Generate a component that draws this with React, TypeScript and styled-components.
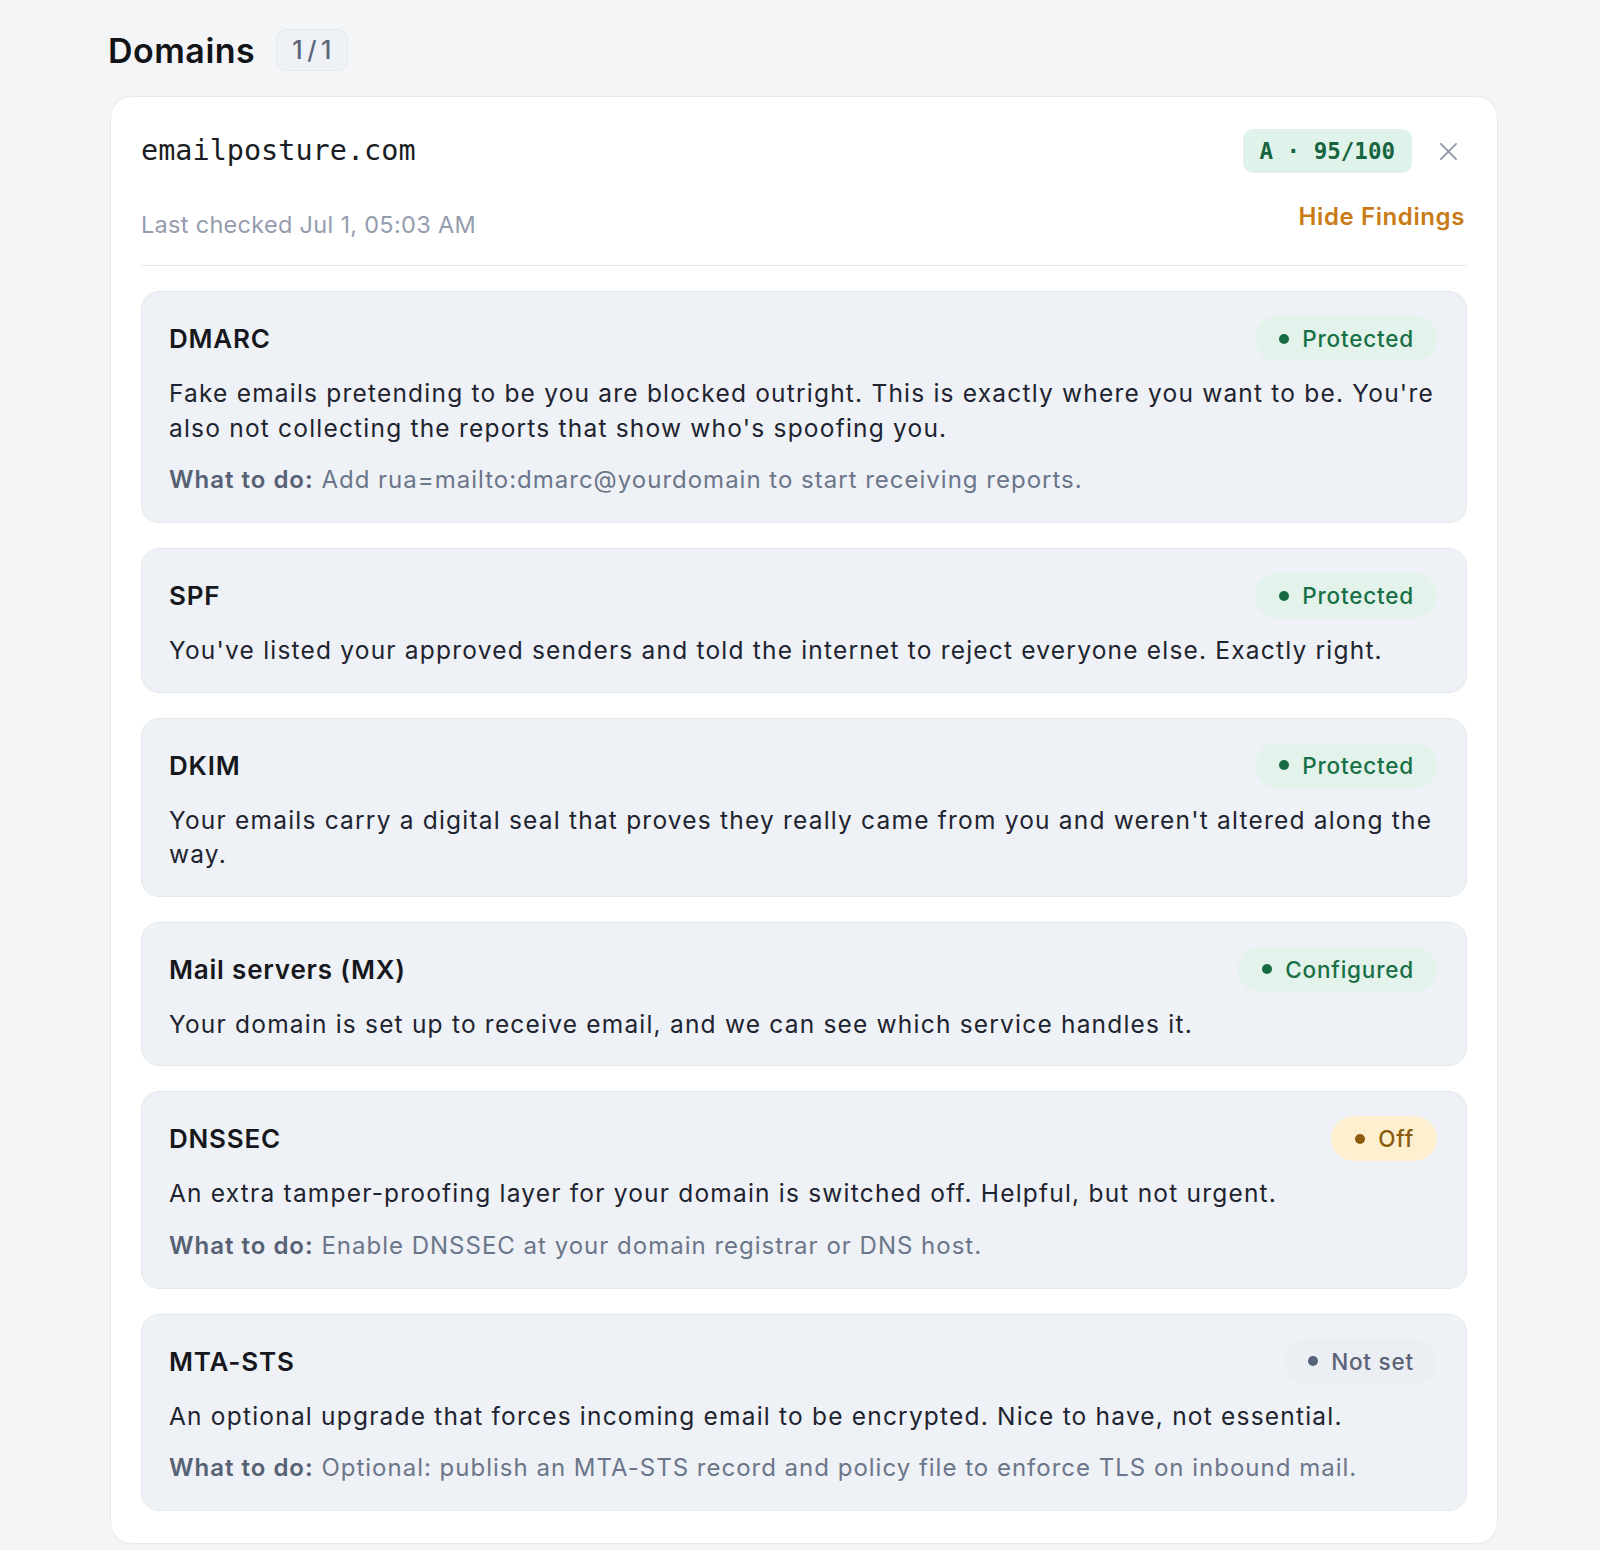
import React from "react";
import styled, { createGlobalStyle } from "styled-components";

const GlobalStyle = createGlobalStyle`
  html, body { margin: 0; padding: 0; }
  body {
    background: #f4f5f7;
    font-family: Inter, "Noto Sans", "Liberation Sans", sans-serif;
    -webkit-font-smoothing: antialiased;
  }
  * { box-sizing: border-box; }
`;

const Page = styled.div`
  padding: 29px 102px 7px 110px;
`;

const TitleRow = styled.div`
  display: flex;
  align-items: center;
  gap: 21px;
  height: 42px;
  margin-left: -2px;
  margin-bottom: 25px;
`;

const PageTitle = styled.h1`
  margin: 0;
  font-size: 34px;
  font-weight: 600;
  color: #121418;
  letter-spacing: 0.5px;
`;

const CountPill = styled.span`
  display: inline-flex;
  align-items: center;
  justify-content: center;
  height: 42px;
  padding: 0 11px 0 15px;
  border-radius: 10px;
  background: #eef1f5;
  border: 1px solid #e4e8ee;
  color: #5b6478;
  font-size: 25px;
  font-weight: 500;
  letter-spacing: 4.5px;
`;

const Card = styled.section`
  background: #fff;
  border: 1px solid #e6e9ee;
  border-radius: 22px;
  padding: 32px 30px 32px 30px;
`;

const CardHeader = styled.div`
  display: flex;
  justify-content: space-between;
  align-items: flex-start;
  padding-bottom: 25px;
  border-bottom: 1px solid #e4e7ec;
`;

const HeaderLeft = styled.div`
  display: flex;
  flex-direction: column;
`;

const DomainName = styled.div`
  font-family: "DejaVu Sans Mono", "Liberation Mono", monospace;
  font-size: 28.5px;
  line-height: 44px;
  color: #1a1d24;
`;

const Meta = styled.div`
  margin-top: 37px;
  font-size: 23.5px;
  line-height: 30px;
  letter-spacing: 0.3px;
  color: #959cae;
`;

const HeaderRight = styled.div`
  display: flex;
  flex-direction: column;
  align-items: flex-end;
`;

const ScoreRow = styled.div`
  display: flex;
  align-items: center;
  gap: 18px;
`;

const ScorePill = styled.span`
  display: inline-flex;
  align-items: center;
  height: 44px;
  padding: 0 17px;
  border-radius: 10px;
  background: #e0f3ea;
  color: #16653f;
  font-family: "DejaVu Sans Mono", "Liberation Mono", monospace;
  font-weight: 700;
  font-size: 22.5px;
  white-space: pre;
`;

const CloseButton = styled.button`
  width: 36px;
  height: 44px;
  margin-right: 1px;
  padding: 0;
  border: none;
  background: transparent;
  display: flex;
  align-items: center;
  justify-content: center;
  color: #8d94a8;
  cursor: pointer;
`;

const HideLink = styled.button`
  margin-top: 29px;
  margin-right: 2px;
  padding: 0;
  border: none;
  background: transparent;
  font-family: inherit;
  font-size: 24px;
  font-weight: 600;
  line-height: 30px;
  letter-spacing: 0.6px;
  color: #c97a14;
  cursor: pointer;
`;

const FindingList = styled.div`
  margin-top: 25px;
  display: flex;
  flex-direction: column;
  gap: 25px;
`;

const Finding = styled.article`
  background: #eef1f5;
  border: 1px solid #e4e8ee;
  border-radius: 18px;
  padding: 24px 24px 24px 27px;
`;

const FindingHeader = styled.div`
  display: flex;
  justify-content: space-between;
  align-items: center;
  min-height: 45px;
`;

const FindingTitle = styled.h3`
  margin: 0;
  font-size: 26px;
  font-weight: 600;
  letter-spacing: 0.8px;
  color: #16181d;
`;

type Tone = "good" | "warn" | "muted";

const toneColors: Record<Tone, { bg: string; fg: string; dot: string }> = {
  good: { bg: "#e3f2ea", fg: "#187046", dot: "#176b43" },
  warn: { bg: "#fdefcf", fg: "#8b5a0b", dot: "#8b5a0b" },
  muted: { bg: "#ebeef3", fg: "#5a6377", dot: "#56627a" },
};

const Badge = styled.span<{ $tone: Tone }>`
  display: inline-flex;
  align-items: center;
  gap: 13px;
  height: 45px;
  padding: 0 23px 0 24px;
  margin-right: 5px;
  border-radius: 23px;
  background: ${(p) => toneColors[p.$tone].bg};
  color: ${(p) => toneColors[p.$tone].fg};
  font-size: 22.5px;
  font-weight: 500;
  letter-spacing: 0.8px;
`;

const Dot = styled.span<{ $tone: Tone }>`
  width: 10px;
  height: 10px;
  border-radius: 50%;
  background: ${(p) => toneColors[p.$tone].dot};
`;

const Description = styled.p`
  margin: 15px 0 0;
  font-size: 24.5px;
  line-height: 34.5px;
  letter-spacing: 1.2px;
  color: #1e2430;
`;

const Advice = styled.p`
  margin: 17px 0 0;
  font-size: 24px;
  line-height: 36px;
  letter-spacing: 1px;
  color: #6b768a;
`;

const AdviceLabel = styled.strong`
  font-weight: 600;
  color: #566174;
`;

type Item = {
  title: string;
  status: string;
  tone: Tone;
  desc: string;
  todo?: string;
};

const items: Item[] = [
  {
    title: "DMARC",
    status: "Protected",
    tone: "good",
    desc:
      "Fake emails pretending to be you are blocked outright. This is exactly where you want to be. You're also not collecting the reports that show who's spoofing you.",
    todo: "Add rua=mailto:dmarc@yourdomain to start receiving reports.",
  },
  {
    title: "SPF",
    status: "Protected",
    tone: "good",
    desc:
      "You've listed your approved senders and told the internet to reject everyone else. Exactly right.",
  },
  {
    title: "DKIM",
    status: "Protected",
    tone: "good",
    desc:
      "Your emails carry a digital seal that proves they really came from you and weren't altered along the way.",
  },
  {
    title: "Mail servers (MX)",
    status: "Configured",
    tone: "good",
    desc:
      "Your domain is set up to receive email, and we can see which service handles it.",
  },
  {
    title: "DNSSEC",
    status: "Off",
    tone: "warn",
    desc:
      "An extra tamper-proofing layer for your domain is switched off. Helpful, but not urgent.",
    todo: "Enable DNSSEC at your domain registrar or DNS host.",
  },
  {
    title: "MTA-STS",
    status: "Not set",
    tone: "muted",
    desc:
      "An optional upgrade that forces incoming email to be encrypted. Nice to have, not essential.",
    todo:
      "Optional: publish an MTA-STS record and policy file to enforce TLS on inbound mail.",
  },
];

const CloseIcon = () => (
  <svg width="19" height="19" viewBox="0 0 20 20" fill="none" stroke="currentColor" strokeWidth="1.8" strokeLinecap="round">
    <path d="M2 2 L18 18 M18 2 L2 18" />
  </svg>
);

export default function App() {
  return (
    <>
      <GlobalStyle />
      <Page>
        <TitleRow>
          <PageTitle>Domains</PageTitle>
          <CountPill>1/1</CountPill>
        </TitleRow>
        <Card>
          <CardHeader>
            <HeaderLeft>
              <DomainName>emailposture.com</DomainName>
              <Meta>Last checked Jul 1, 05:03 AM</Meta>
            </HeaderLeft>
            <HeaderRight>
              <ScoreRow>
                <ScorePill>A · 95/100</ScorePill>
                <CloseButton aria-label="Remove">
                  <CloseIcon />
                </CloseButton>
              </ScoreRow>
              <HideLink>Hide Findings</HideLink>
            </HeaderRight>
          </CardHeader>
          <FindingList>
            {items.map((it) => (
              <Finding key={it.title}>
                <FindingHeader>
                  <FindingTitle>{it.title}</FindingTitle>
                  <Badge $tone={it.tone}>
                    <Dot $tone={it.tone} />
                    {it.status}
                  </Badge>
                </FindingHeader>
                <Description>{it.desc}</Description>
                {it.todo && (
                  <Advice>
                    <AdviceLabel>What to do:</AdviceLabel> {it.todo}
                  </Advice>
                )}
              </Finding>
            ))}
          </FindingList>
        </Card>
      </Page>
    </>
  );
}
